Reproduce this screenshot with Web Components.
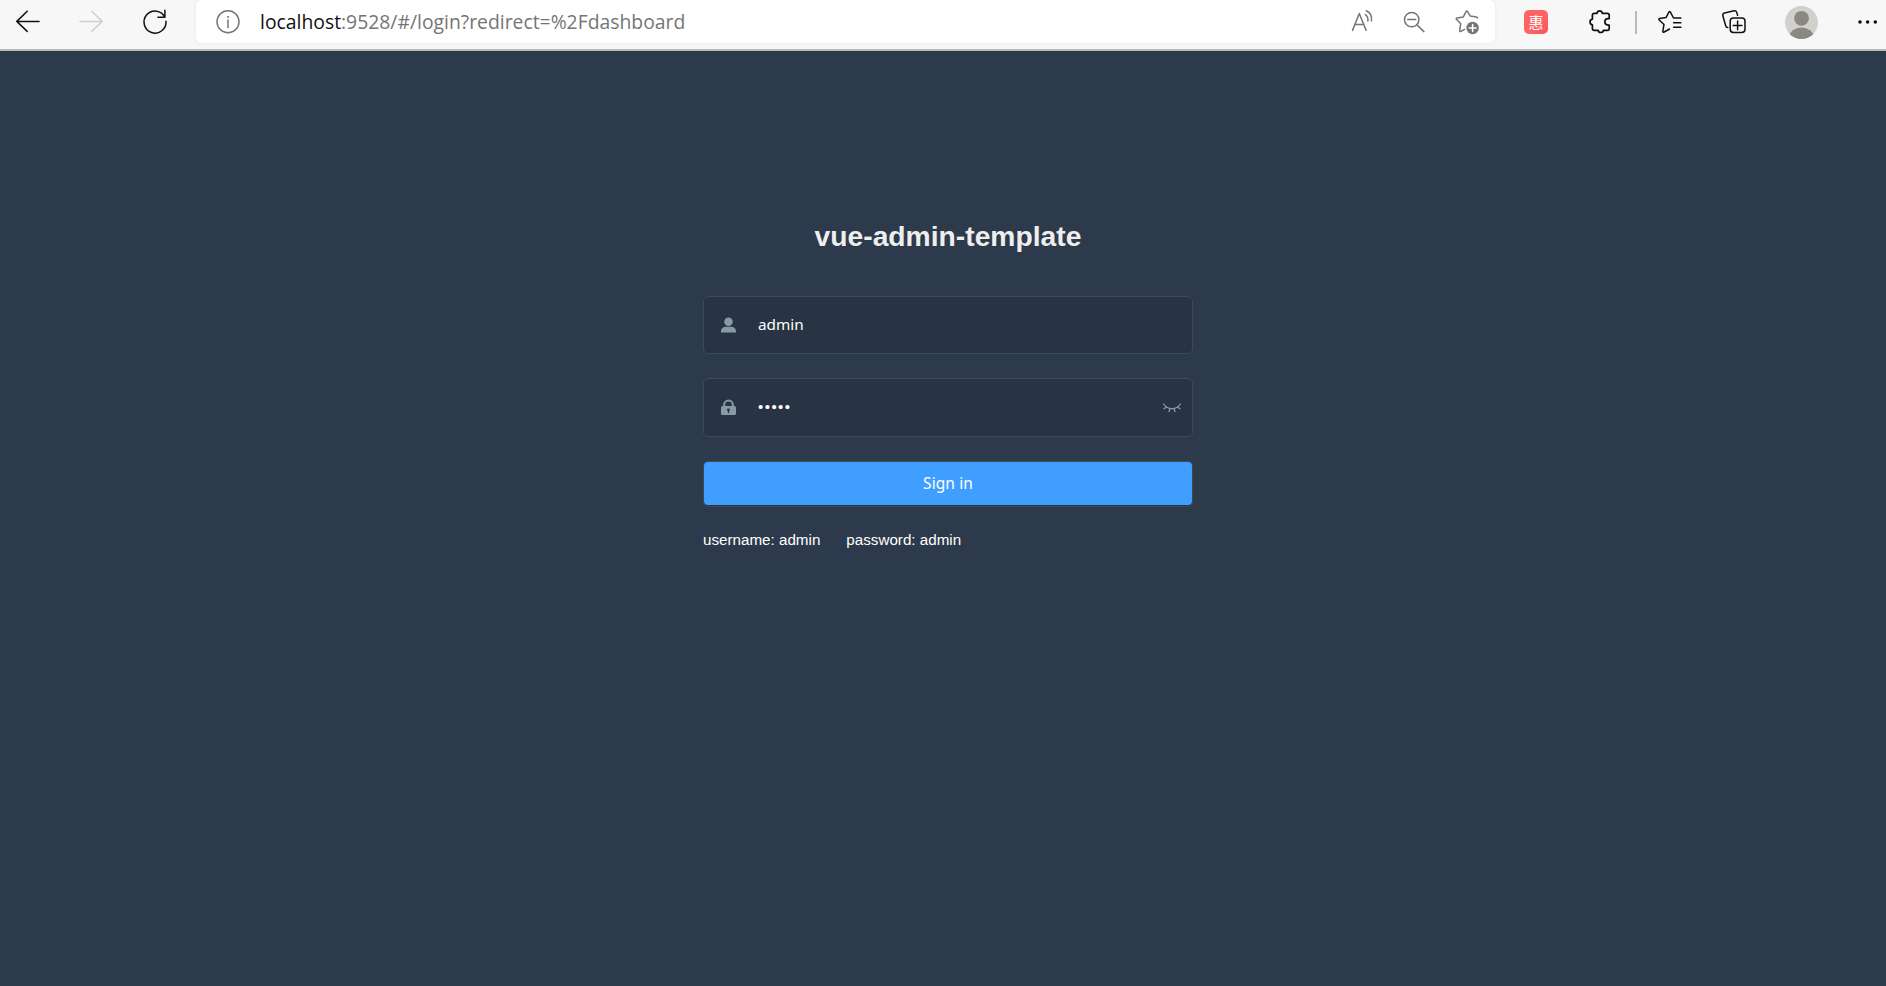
<!DOCTYPE html>
<html lang="en">
<head>
<meta charset="utf-8">
<title>vue-admin-template</title>
<style>
  body {
    margin: 0;
    height: 986px;
    overflow: hidden;
    display: flex;
    flex-direction: column;
    background-color: #2d3a4b;
    font-family: "Liberation Sans", Arial, sans-serif;
  }
</style>
</head>
<body>
<browser-toolbar>
  <address-bar>
    <span slot="host">localhost</span><span slot="path">:9528/#/login?redirect=%2Fdashboard</span>
  </address-bar>
</browser-toolbar>
<login-page>
  <span slot="title">vue-admin-template</span>
  <login-field icon="user">admin</login-field>
  <login-field icon="lock" secret>•••••</login-field>
  <login-button>Sign in</login-button>
  <span slot="tips">username: admin</span>
  <span slot="tips">password: admin</span>
</login-page>

<script>
const ICONS = {
  back: '<path d="M23 11.4H.8M11.2 1.2.8 11.4l10.4 10"/>',
  forward: '<path d="M0 11.4h22.2M11.8 1.2l10.4 10.2-10.4 10"/>',
  reload: '<path d="M21.9 7.2A11 11 0 1 0 23 11.2M21.9.2v7h-7"/>',
  info: '<circle cx="12" cy="11.8" r="11"/><path d="M12 10v7.4"/><circle cx="12" cy="6.9" r=".6" fill="currentColor" stroke-width=".8"/>',
  read: '<path d="M.5 20.4 7.3 3.5l6.8 16.9M2.8 14.6h9M13.3 4.6c1.9 1.1 2.9 3.2 2.6 6.4M14.2.7c3.8 1.6 5.9 5.2 5.2 10.1"/>',
  zoomout: '<circle cx="7.7" cy="9.6" r="7.2"/><path d="M3.7 9.6h8M13 14.9l6.9 6.7"/>',
  favadd: '<path d="M21.4 8.1c.1-.7-.3-1.1-1-1.2l-6.1-.8-2.9-4.7c-.3-.5-.9-.5-1.2 0L7.200 7.1l-6.2.8c-.8.1-1.1.9-.5 1.4l4.2 4.4-1 6.7c-.1.8.6 1.3 1.3.9l3.5-1.9"/><circle cx="16.600" cy="18" r="6.2" fill="currentColor" stroke="none"/><path stroke="#fff" d="M16.600 14.6v6.8M13.200 18h6.8"/>',
  puzzle: '<path stroke-width="1.7" d="M6.3 3.3H9C9.3 1.700 10.200.9 11.600.9S14 1.700 14.300 3.3H19.300c1.200 0 1.900.7 1.900 1.900V8.600H20c-4.200 0-4.200 6.500 0 6.500h1.200v3.300c0 1.200-.7 1.900-1.900 1.900H15.400c-.2 1.400-1.200 2.200-2.600 2.200s-2.400-.8-2.600-2.200H6.300c-1.200 0-1.900-.7-1.900-1.900V14.900C2.800 14.600 2 13.500 2 12.100S2.800 9.500 4.400 9.200V5.200c0-1.200.7-1.900 1.900-1.900Z"/>',
  favorites: '<path d="M22.9 8h-7.4l-3.1-5.9c-.4-.8-1.1-.8-1.5 0L8 7.6l-6.3.9c-.8.1-1.1.9-.5 1.5l4.8 4.5-1.2 6.6c-.1.9.6 1.4 1.4.9l5.3-3M15.6 12.7h7.3M15.6 17.2h7.3"/>',
  collections: '<rect x="8.2" y="8" width="14.8" height="14.5" rx="3.2"/><path d="M15.6 11v8.8M11.2 15.4H20M5.800 17.5c-1.1-.1-1.800-.7-2.1-1.800L.9 6C.5 4.5 1.2 3.3 2.6 2.9L12 .8c1.4-.3 2.4.4 2.800 1.800l.8 2.700"/>',
  more: '<g fill="currentColor" stroke="none"><circle cx="3" cy="12" r="1.8"/><circle cx="10.6" cy="12" r="1.8"/><circle cx="18.3" cy="12" r="1.8"/></g>'
};

class ToolIcon extends HTMLElement {
  connectedCallback() {
    this.attachShadow({ mode: 'open' });
    this.shadowRoot.innerHTML = `
      <style>
        :host {
          display: block;
          flex: none;
          width: 24px;
          height: 24px;
        }
        svg {
          display: block;
          overflow: visible;
          fill: none;
          stroke: currentColor;
          stroke-width: 1.5;
          stroke-linecap: round;
          stroke-linejoin: round;
        }
      </style>
      <svg width="24" height="24" viewBox="0 0 24 24">${ICONS[this.getAttribute('name')]}</svg>
    `;
  }
}

class AddressBar extends HTMLElement {
  connectedCallback() {
    this.attachShadow({ mode: 'open' });
    this.shadowRoot.innerHTML = `
      <style>
        :host {
          display: flex;
          align-items: center;
          box-sizing: border-box;
          width: 1299px;
          height: 43px;
          margin: 0 29px;
          padding: 1px 15px 0 20px;
          border-radius: 6px;
          background-color: #fff;
          box-shadow: 0 0 4px rgba(0, 0, 0, 0.07);
          color: #757575;
        }
        .url {
          flex: 1;
          margin-left: 20px;
          font: 19.35px/28px "Open Sans", "Noto Sans", sans-serif;
          white-space: nowrap;
        }
        .host {
          color: #111;
        }
        .actions {
          display: flex;
          gap: 28px;
        }
      </style>
      <tool-icon name="info"></tool-icon>
      <div class="url"><span class="host"><slot name="host"></slot></span><slot name="path"></slot></div>
      <div class="actions">
        <tool-icon name="read"></tool-icon>
        <tool-icon name="zoomout"></tool-icon>
        <tool-icon name="favadd"></tool-icon>
      </div>
    `;
  }
}

class BrowserToolbar extends HTMLElement {
  connectedCallback() {
    this.attachShadow({ mode: 'open' });
    this.shadowRoot.innerHTML = `
      <style>
        :host {
          display: flex;
          align-items: flex-start;
          box-sizing: border-box;
          flex: none;
          height: 51px;
          padding-left: 16px;
          border-bottom: 2px solid #bababa;
          background-color: #f7f7f7;
          color: #111;
        }
        .nav, .tools {
          display: flex;
          align-items: center;
          height: 44px;
        }
        .nav {
          gap: 39.5px;
        }
        .tools {
          gap: 40px;
        }
        .disabled {
          color: #cfcfcf;
        }
        .badge {
          width: 24px;
          height: 24px;
          border-radius: 5px;
          background: linear-gradient(135deg, #ff6262 60%, #f85258);
          color: #fff;
          font: 15px/23px "Noto Sans CJK SC", sans-serif;
          text-align: center;
        }
        .divider {
          width: 2px;
          height: 23px;
          margin: 0 -19px 0 -17px;
          background-color: #bbb;
        }
        .avatar {
          display: block;
          margin: 0 -1px;
        }
      </style>
      <div class="nav">
        <tool-icon name="back"></tool-icon>
        <tool-icon name="forward" class="disabled"></tool-icon>
        <tool-icon name="reload"></tool-icon>
      </div>
      <slot></slot>
      <div class="tools">
        <div class="badge">惠</div>
        <tool-icon name="puzzle"></tool-icon>
        <div class="divider"></div>
        <tool-icon name="favorites"></tool-icon>
        <tool-icon name="collections"></tool-icon>
        <svg class="avatar" width="33" height="33" viewBox="0 0 33 33">
          <clipPath id="round"><circle cx="16.5" cy="16.5" r="16.5"/></clipPath>
          <g clip-path="url(#round)">
            <rect width="33" height="33" fill="#d2d0cd"/>
            <circle cx="16.5" cy="12.3" r="7.4" fill="#8b8783"/>
            <ellipse cx="16.5" cy="30.5" rx="12" ry="9" fill="#8b8783"/>
          </g>
        </svg>
        <tool-icon name="more"></tool-icon>
      </div>
    `;
  }
}

class LoginField extends HTMLElement {
  connectedCallback() {
    const secret = this.hasAttribute('secret');
    const glyph = this.getAttribute('icon') === 'user'
      ? '<circle cx="7.5" cy="3.8" r="4.3"/><path d="M0 14.5v-1.1C0 10.400 2 8.700 5 8.700h5c3 0 5 1.700 5 4.700v1.100Z"/>'
      : '<path d="M2.2 6V4.8a5.3 5.3 0 0 1 10.6 0V6h-2V4.9a3.3 3.3 0 0 0-6.6 0V6Z"/><path fill-rule="evenodd" d="M1.5 6h12A1.5 1.5 0 0 1 15 7.5v6a1.5 1.5 0 0 1-1.5 1.5h-12A1.5 1.5 0 0 1 0 13.5v-6A1.5 1.5 0 0 1 1.5 6ZM6 9.8c0 .6.3 1 .9 1.2V13h1.2v-2c.6-.2.9-.6.9-1.2 0-1.900-3-1.900-3 0Z"/>';
    this.attachShadow({ mode: 'open' });
    this.shadowRoot.innerHTML = `
      <style>
        :host {
          display: flex;
          align-items: center;
          box-sizing: border-box;
          height: 58px;
          padding: 0 11px 0 17px;
          border: 1px solid #3e4a57;
          border-radius: 5px;
          background-color: #283443;
          color: #889aa4;
        }
        :host([secret]) {
          height: 59px;
        }
        svg {
          display: block;
          fill: currentColor;
          overflow: visible;
        }
        .value {
          flex: 1;
          margin: -3px 0 0 22px;
          color: #fff;
          font: 15.3px/24px "Noto Sans", "Open Sans", sans-serif;
        }
        :host([secret]) .value {
          margin-top: -2px;
          font-family: "Liberation Sans", sans-serif;
          font-size: 15px;
          letter-spacing: 1.45px;
        }
        .eye {
          fill: none;
          stroke: currentColor;
          stroke-width: 1.3;
          stroke-linecap: round;
        }
      </style>
      <svg width="15" height="15" viewBox="0 0 15 15">${glyph}</svg>
      <div class="value"><slot></slot></div>
      ${secret ? '<svg class="eye" width="18" height="10" viewBox="0 0 18 10"><path d="M.6 1C4.8 7.200 13.200 7.200 17.400 1M3.500 4 1 5.800M6.900 5.700 6 8.600M11.100 5.700l.9 2.900M14.500 4l2.500 1.800"/></svg>' : ''}
    `;
  }
}

class LoginButton extends HTMLElement {
  connectedCallback() {
    this.attachShadow({ mode: 'open' });
    this.shadowRoot.innerHTML = `
      <style>
        :host {
          display: block;
          box-sizing: border-box;
          height: 46px;
          border: 1px solid #3e4a57;
          border-radius: 5px;
          background-color: #283443;
        }
        button {
          display: block;
          width: 100%;
          height: 43px;
          padding: 0;
          border: 0;
          border-radius: 4px;
          background-color: #409eff;
          color: #fff;
          font: 15.5px/43px "Noto Sans", "Open Sans", sans-serif;
          letter-spacing: 0.1px;
        }
      </style>
      <button type="button"><slot></slot></button>
    `;
  }
}

class LoginPage extends HTMLElement {
  connectedCallback() {
    this.attachShadow({ mode: 'open' });
    this.shadowRoot.innerHTML = `
      <style>
        :host {
          display: flex;
          flex: 1;
          justify-content: center;
          padding: 168px 0 0 10px;
          background-color: #2d3a4b;
        }
        form {
          width: 490px;
        }
        h3 {
          margin: 0 0 43px;
          color: #eee;
          font-size: 28.25px;
          line-height: 34px;
          text-align: center;
        }
        .fields {
          display: flex;
          flex-direction: column;
          gap: 24px;
        }
        .tips {
          display: flex;
          gap: 26px;
          margin-top: 23px;
          color: #fff;
          font-size: 15.2px;
          line-height: 20px;
        }
      </style>
      <form>
        <h3><slot name="title"></slot></h3>
        <div class="fields"><slot></slot></div>
        <div class="tips"><slot name="tips"></slot></div>
      </form>
    `;
  }
}

customElements.define('tool-icon', ToolIcon);
customElements.define('address-bar', AddressBar);
customElements.define('browser-toolbar', BrowserToolbar);
customElements.define('login-field', LoginField);
customElements.define('login-button', LoginButton);
customElements.define('login-page', LoginPage);
</script>
</body>
</html>
